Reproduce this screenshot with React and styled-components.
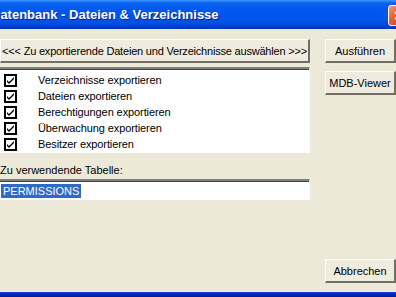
import styled, { createGlobalStyle } from "styled-components";

const GlobalStyle = createGlobalStyle`
  html, body {
    margin: 0;
    padding: 0;
    background: #ece9d8;
  }
  body {
    font-family: "Liberation Sans", Arial, sans-serif;
    font-size: 11px;
  }
`;

const Window = styled.div`
  width: 396px;
  height: 297px;
  overflow: hidden;
  display: flex;
  flex-direction: column;
  background: #ece9d8;
`;

const TitleBar = styled.div`
  position: relative;
  height: 29px;
  flex: none;
  display: flex;
  align-items: center;
  background: linear-gradient(
    to bottom,
    #3d95ff 0,
    #0a62f0 3px,
    #0058ee 10px,
    #0055ea 20px,
    #0048dc 25px,
    #003bc8 28px,
    #0030b0 29px
  );
`;

const Title = styled.span`
  margin-left: -9px;
  color: #fff;
  font-family: "Liberation Sans", Arial, sans-serif;
  font-weight: bold;
  font-size: 13px;
  text-shadow: 1px 1px 0 #0a1e8a;
  white-space: nowrap;
`;

const CloseButton = styled.div`
  position: absolute;
  left: 388px;
  top: 5px;
  width: 21px;
  height: 21px;
  box-sizing: border-box;
  border: 1px solid #fff;
  border-radius: 3px;
  background: linear-gradient(135deg, #f09a7c 0%, #e35a35 45%, #c7401e 100%);
  display: flex;
  align-items: center;
  justify-content: center;
`;

const Body = styled.div`
  flex: 1;
  display: flex;
  gap: 15px;
  padding: 10px 0 0 0;
`;

const LeftColumn = styled.div`
  width: 311px;
  display: flex;
  flex-direction: column;
`;

const RightColumn = styled.div`
  width: 76px;
  display: flex;
  flex-direction: column;
`;

const Button = styled.button`
  box-sizing: border-box;
  height: 24px;
  width: 100%;
  padding: 0;
  background: #efebde;
  border-style: solid;
  border-width: 1px 2px 2px 1px;
  border-color: #fff #716f64 #716f64 #fff;
  font-family: "Liberation Sans", Arial, sans-serif;
  font-size: 11px;
  letter-spacing: ${(p) => (p.$tight ? "-0.2px" : "0")};
  color: #000;
  white-space: nowrap;
  text-align: center;
  overflow: hidden;
`;

const ListBox = styled.div`
  margin-top: 4px;
  height: 86px;
  box-sizing: border-box;
  background: #fff;
  border-style: solid;
  border-width: 2px 1px 1px 0;
  border-color: #808080 #fff #fff #808080;
  box-shadow: inset 0 1px 0 #404040;
  padding: 3px 0 0 4px;
  display: flex;
  flex-direction: column;
`;

const Row = styled.div`
  height: 16px;
  display: flex;
  align-items: center;
  gap: 21px;
`;

const CheckBox = styled.span`
  width: 13px;
  height: 13px;
  box-sizing: border-box;
  border: 2px solid #000;
  background: #fff;
  display: flex;
  align-items: center;
  justify-content: center;
`;

const RowLabel = styled.span`
  font-size: 11px;
  letter-spacing: -0.1px;
  color: #000;
  white-space: nowrap;
`;

const FieldLabel = styled.div`
  margin-top: 11px;
  font-size: 11px;
  color: #000;
`;

const TextInput = styled.div`
  margin-top: 3px;
  height: 21px;
  width: 310px;
  box-sizing: border-box;
  background: #fff;
  border-style: solid;
  border-width: 2px 1px 1px 0;
  border-color: #808080 #fff #fff #808080;
  box-shadow: inset 0 1px 0 #404040;
  padding: 1px 0 0 1px;
  display: flex;
  align-items: center;
`;

const Selected = styled.span`
  background: #316ac5;
  color: #fff;
  font-size: 11px;
  padding: 0 2px;
  line-height: 14px;
`;

const Spacer = styled.div`
  flex: 1;
`;

const BottomFrame = styled.div`
  height: 5px;
  flex: none;
  background: linear-gradient(to bottom, #1c45d8 0, #0831c8 1px, #0026a8 3px, #001c90 5px);
`;

const rows = [
  "Verzeichnisse exportieren",
  "Dateien exportieren",
  "Berechtigungen exportieren",
  "Überwachung exportieren",
  "Besitzer exportieren",
];

function Check() {
  return (
    <svg width="9" height="9" viewBox="0 0 9 9">
      <path d="M1 4 L3 6 L8 1 L8 3 L3 8 L1 6 Z" fill="#000" />
    </svg>
  );
}

function CloseIcon() {
  return (
    <svg width="11" height="11" viewBox="0 0 11 11">
      <path d="M2 2 L9 9 M9 2 L2 9" stroke="#fff" strokeWidth="2" />
    </svg>
  );
}

export default function App() {
  return (
    <>
      <GlobalStyle />
      <Window>
        <TitleBar>
          <Title>Datenbank - Dateien &amp; Verzeichnisse</Title>
          <CloseButton>
            <CloseIcon />
          </CloseButton>
        </TitleBar>
        <Body>
          <LeftColumn>
            <Button $tight>
              {"<<< Zu exportierende Dateien und Verzeichnisse auswählen >>>"}
            </Button>
            <ListBox>
              {rows.map((r) => (
                <Row key={r}>
                  <CheckBox>
                    <Check />
                  </CheckBox>
                  <RowLabel>{r}</RowLabel>
                </Row>
              ))}
            </ListBox>
            <FieldLabel>Zu verwendende Tabelle:</FieldLabel>
            <TextInput>
              <Selected>PERMISSIONS</Selected>
            </TextInput>
          </LeftColumn>
          <RightColumn>
            <Button>Ausführen</Button>
            <Button style={{ marginTop: 8 }}>MDB-Viewer</Button>
            <Spacer />
            <Button style={{ marginBottom: 9 }}>Abbrechen</Button>
          </RightColumn>
        </Body>
        <BottomFrame />
      </Window>
    </>
  );
}
